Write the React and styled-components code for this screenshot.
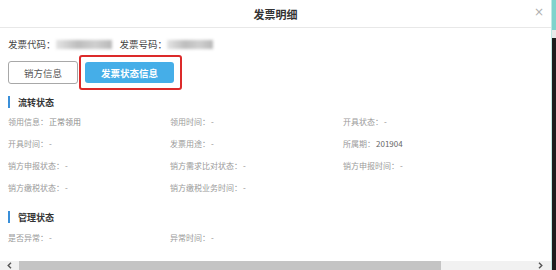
import React from 'react';
import styled, { createGlobalStyle } from 'styled-components';

const GlobalStyle = createGlobalStyle`
  html, body {
    margin: 0;
    padding: 0;
    background: #fff;
  }
  body {
    font-family: "Noto Sans CJK SC", "Noto Sans", sans-serif;
  }
`;

const Page = styled.div`
  display: flex;
  width: 556px;
  height: 270px;
  overflow: hidden;
`;

const Modal = styled.div`
  flex: 1;
  display: flex;
  flex-direction: column;
  background: #fff;
`;

const Edge = styled.div`
  width: 4px;
  background: linear-gradient(to bottom, #7fd3cc 0, #7fd3cc 30px, #e8e8e8 30px, #e8e8e8 38px, #1d1d1d 38px);
  border-left: 1px solid #bfe9e4;
`;

const Header = styled.div`
  position: relative;
  height: 27px;
  border-bottom: 1px solid #e8e8e8;
  display: flex;
  align-items: center;
  justify-content: center;
`;

const Title = styled.div`
  font-size: 11px;
  font-weight: 700;
  color: #333;
`;

const Close = styled.span`
  position: absolute;
  right: 7px;
  top: 6px;
  font-size: 12px;
  line-height: 12px;
  color: #b0b0b0;
  font-family: "DejaVu Sans", sans-serif;
`;

const Body = styled.div`
  flex: 1;
  display: flex;
  flex-direction: column;
  padding: 0 8px;
`;

const InfoRow = styled.div`
  margin-top: 9px;
  height: 14px;
  display: flex;
  align-items: center;
  font-size: 9.5px;
  color: #444;
`;

const Label = styled.span`
  white-space: nowrap;
`;

const Blur = styled.span`
  display: inline-block;
  width: ${(p) => p.$w}px;
  height: 9px;
  margin: 0 8px 0 0;
  background: linear-gradient(to right, #e4e4e4, #bdbdbd 40%, #cfcfcf 70%, #b8b8b8);
  filter: blur(1.5px);
`;

const ButtonRow = styled.div`
  margin-top: 4px;
  height: 35px;
  display: flex;
  align-items: center;
  gap: 1px;
`;

const OutlineButton = styled.button`
  width: 70px;
  height: 23px;
  border: 1px solid #a8a8a8;
  border-radius: 3px;
  background: #fff;
  color: #555;
  font-family: inherit;
  font-size: 9.5px;
  padding: 0;
`;

const Highlight = styled.div`
  border: 2px solid #dc2a2a;
  border-radius: 3px;
  padding: 5px 6px 5px 4px;
  display: flex;
`;

const PrimaryButton = styled.button`
  width: 89px;
  height: 21px;
  border: none;
  border-radius: 3px;
  background: #45aee8;
  color: #fff;
  font-family: inherit;
  font-size: 9.5px;
  font-weight: 700;
  padding: 0;
`;

const SectionTitle = styled.div`
  margin-top: ${(p) => p.$mt}px;
  height: 14px;
  display: flex;
  align-items: center;
  gap: 8px;
  font-size: 9px;
  font-weight: 700;
  color: #333;
  &::before {
    content: '';
    width: 2px;
    height: 12px;
    background: #3a8fd9;
  }
`;

const Grid = styled.div`
  margin-top: ${(p) => p.$mt}px;
  display: grid;
  grid-template-columns: 162px 173px 1fr;
  grid-auto-rows: 22px;
  align-items: center;
  font-size: 8px;
  color: #9a9a9a;
`;

const Cell = styled.div`
  white-space: nowrap;
`;

const Value = styled.span`
  margin-left: 1px;
  color: ${(p) => (p.$dark ? '#666' : '#8a8a8a')};
`;

const Scrollbar = styled.div`
  height: 9px;
  background: #f1f1f1;
  display: flex;
  align-items: center;
`;

const ArrowBox = styled.div`
  width: ${(p) => p.$w}px;
  height: 9px;
  display: flex;
  align-items: center;
  justify-content: center;
`;

const Track = styled.div`
  flex: 1;
  height: 9px;
  display: flex;
`;

const Thumb = styled.div`
  width: 422px;
  height: 9px;
  background: #c4c4c4;
`;

const Chevron = ({ dir }) => (
  <svg width="5" height="7" viewBox="0 0 5 7">
    <path
      d={dir === 'left' ? 'M4 0.8 L1.2 3.5 L4 6.2' : 'M1 0.8 L3.8 3.5 L1 6.2'}
      fill="none"
      stroke="#555"
      strokeWidth="1.4"
    />
  </svg>
);

const flow = [
  ['领用信息：', '正常领用'],
  ['领用时间：', '-'],
  ['开具状态：', '-'],
  ['开具时间：', '-'],
  ['发票用途：', '-'],
  ['所属期：', '201904', true],
  ['销方申报状态：', '-'],
  ['销方需求比对状态：', '-'],
  ['销方申报时间：', '-'],
  ['销方缴税状态：', '-'],
  ['销方缴税业务时间：', '-'],
];

const manage = [
  ['是否异常：', '-'],
  ['异常时间：', '-'],
];

const Cells = ({ items }) =>
  items.map(([label, value, dark]) => (
    <Cell key={label}>
      {label}
      <Value $dark={dark}>{value}</Value>
    </Cell>
  ));

const App = () => (
  <Page>
    <GlobalStyle />
    <Modal>
      <Header>
        <Title>发票明细</Title>
        <Close>×</Close>
      </Header>
      <Body>
        <InfoRow>
          <Label>发票代码：</Label>
          <Blur $w={56} />
          <Label>发票号码：</Label>
          <Blur $w={46} />
        </InfoRow>
        <ButtonRow>
          <OutlineButton>销方信息</OutlineButton>
          <Highlight>
            <PrimaryButton>发票状态信息</PrimaryButton>
          </Highlight>
        </ButtonRow>
        <SectionTitle $mt={5}>流转状态</SectionTitle>
        <Grid $mt={1}>
          <Cells items={flow} />
        </Grid>
        <SectionTitle $mt={12}>管理状态</SectionTitle>
        <Grid $mt={2}>
          <Cells items={manage} />
        </Grid>
      </Body>
      <Scrollbar>
        <ArrowBox $w={19}>
          <Chevron dir="left" />
        </ArrowBox>
        <Track>
          <Thumb />
        </Track>
        <ArrowBox $w={22}>
          <Chevron dir="right" />
        </ArrowBox>
      </Scrollbar>
    </Modal>
    <Edge />
  </Page>
);

export default App;
